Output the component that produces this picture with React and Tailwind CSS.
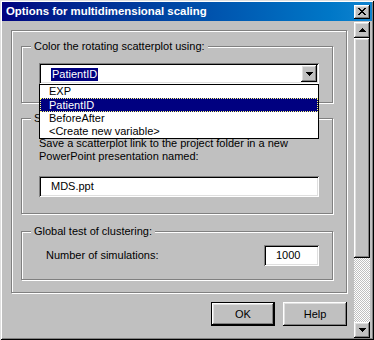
import React from "react";

const raised =
  "shadow-[inset_-1px_-1px_#000,inset_1px_1px_#fff,inset_-2px_-2px_#808080,inset_2px_2px_#dfdfdf]";
const sunken =
  "shadow-[inset_1px_1px_#808080,inset_-1px_-1px_#fff,inset_2px_2px_#000,inset_-2px_-2px_#dfdfdf]";
const etched = "border border-[#808080] shadow-[inset_1px_1px_#fff,1px_1px_#fff]";

function DownArrow() {
  return (
    <svg width="7" height="4" viewBox="0 0 7 4" shapeRendering="crispEdges">
      <polygon points="0,0 7,0 3.5,4" fill="#000" />
    </svg>
  );
}
function UpArrow() {
  return (
    <svg width="7" height="4" viewBox="0 0 7 4" shapeRendering="crispEdges">
      <polygon points="3.5,0 7,4 0,4" fill="#000" />
    </svg>
  );
}

function Group({ label, className, children }) {
  return (
    <div className={`relative w-[312px] ${etched} ${className}`}>
      <span className="absolute left-[9px] top-[-7px] px-[3px] bg-[#c0c0c0] leading-[13px] whitespace-nowrap">
        {label}
      </span>
      {children}
    </div>
  );
}

export default function App() {
  return (
    <div
      className={`w-[374px] h-[340px] bg-[#c0c0c0] p-[2px] flex flex-col overflow-hidden text-[11px] leading-[13px] text-black font-['Liberation_Sans',Arial,sans-serif] shadow-[inset_1px_1px_#dfdfdf,inset_-1px_-1px_#000,inset_2px_2px_#fff,inset_-2px_-2px_#808080]`}
    >
      {/* Title bar */}
      <div className="h-[19px] shrink-0 flex items-center bg-gradient-to-r from-[#000080] to-[#1084d0] pl-[4px] pr-[2px]">
        <span className="text-white font-bold text-[11.4px] whitespace-nowrap">
          Options for multidimensional scaling
        </span>
        <div className={`ml-auto w-[16px] h-[14px] bg-[#c0c0c0] flex items-center justify-center ${raised}`}>
          <svg width="8" height="7" viewBox="0 0 8 7" shapeRendering="crispEdges">
            <path
              d="M0 0h2v1h1v1h2v-1h1v-1h2v1h-1v1h-1v1h-1v1h1v1h1v1h1v1h-2v-1h-1v-1h-2v1h-1v1h-2v-1h1v-1h1v-1h1v-1h-1v-1h-1v-1h-1z"
              fill="#000"
            />
          </svg>
        </div>
      </div>

      {/* Body */}
      <div className="flex flex-1 min-h-0">
        <div className="flex-1 pl-[9px] pt-[9px]">
          <div className={`w-[336px] h-[263px] ${etched} pl-[9px] pt-[15px] flex flex-col`}>
            {/* Group 1 */}
            <Group label="Color the rotating scatterplot using:" className="h-[57px] pl-[17px] pt-[16px] z-10">
              <div className="relative w-[280px]">
                <div className={`h-[21px] bg-white flex items-center pl-[12px] ${sunken}`}>
                  <span className="bg-[#000080] text-white px-[1px] mt-[2px]">PatientID</span>
                  <div className={`ml-auto mr-[2px] w-[16px] h-[17px] bg-[#c0c0c0] flex items-center justify-center ${raised}`}>
                    <DownArrow />
                  </div>
                </div>
                {/* dropdown list */}
                <div className="absolute left-0 top-full w-[280px] bg-white border border-black flex flex-col">
                  <div className="h-[13px] pl-[9px] leading-[13px]">EXP</div>
                  <div className="h-[14px] pl-[8px] leading-[12px] bg-[#000080] text-white border border-dotted border-[#ffff80]">
                    PatientID
                  </div>
                  <div className="h-[13px] pl-[9px] leading-[13px]">BeforeAfter</div>
                  <div className="h-[13px] pl-[9px] leading-[13px]">&lt;Create new variable&gt;</div>
                </div>
              </div>
            </Group>

            {/* Group 2 (label mostly hidden under the open list) */}
            <Group label="Scatterplot link:" className="h-[96px] mt-[15px] pl-[17px] pt-[18px]">
              <div className="leading-[13px]">
                Save a scatterplot link to the project folder in a new
                <br />
                PowerPoint presentation named:
              </div>
              <div className={`mt-[13px] w-[280px] h-[21px] bg-white flex items-center pl-[12px] ${sunken}`}>
                MDS.ppt
              </div>
            </Group>

            {/* Group 3 */}
            <Group label="Global test of clustering:" className="h-[49px] mt-[17px] pl-[24px] pt-[13px] pr-[13px]">
              <div className="flex items-center">
                <span>Number of simulations:</span>
                <div className={`ml-auto w-[55px] h-[21px] bg-white flex items-center pl-[12px] ${sunken}`}>
                  1000
                </div>
              </div>
            </Group>
          </div>

          {/* Buttons */}
          <div className="w-[336px] mt-[9px] flex justify-end gap-[8px]">
            <div className="w-[64px] h-[24px] border border-black">
              <div className={`w-full h-full bg-[#c0c0c0] flex items-center justify-center ${raised}`}>OK</div>
            </div>
            <div className={`w-[64px] h-[24px] bg-[#c0c0c0] flex items-center justify-center ${raised}`}>Help</div>
          </div>
        </div>

        {/* Scrollbar */}
        <div className="w-[16px] mt-[1px] mr-[2px] flex flex-col">
          <div className={`h-[16px] shrink-0 bg-[#c0c0c0] flex items-center justify-center ${raised}`}>
            <UpArrow />
          </div>
          <div className={`h-[220px] shrink-0 bg-[#c0c0c0] ${raised}`} />
          <div className="flex-1 bg-[image:conic-gradient(#fff_25%,#c0c0c0_0_50%,#fff_0_75%,#c0c0c0_0)] bg-size-[2px_2px]" />
          <div className={`h-[16px] shrink-0 bg-[#c0c0c0] flex items-center justify-center ${raised}`}>
            <DownArrow />
          </div>
        </div>
      </div>
    </div>
  );
}
